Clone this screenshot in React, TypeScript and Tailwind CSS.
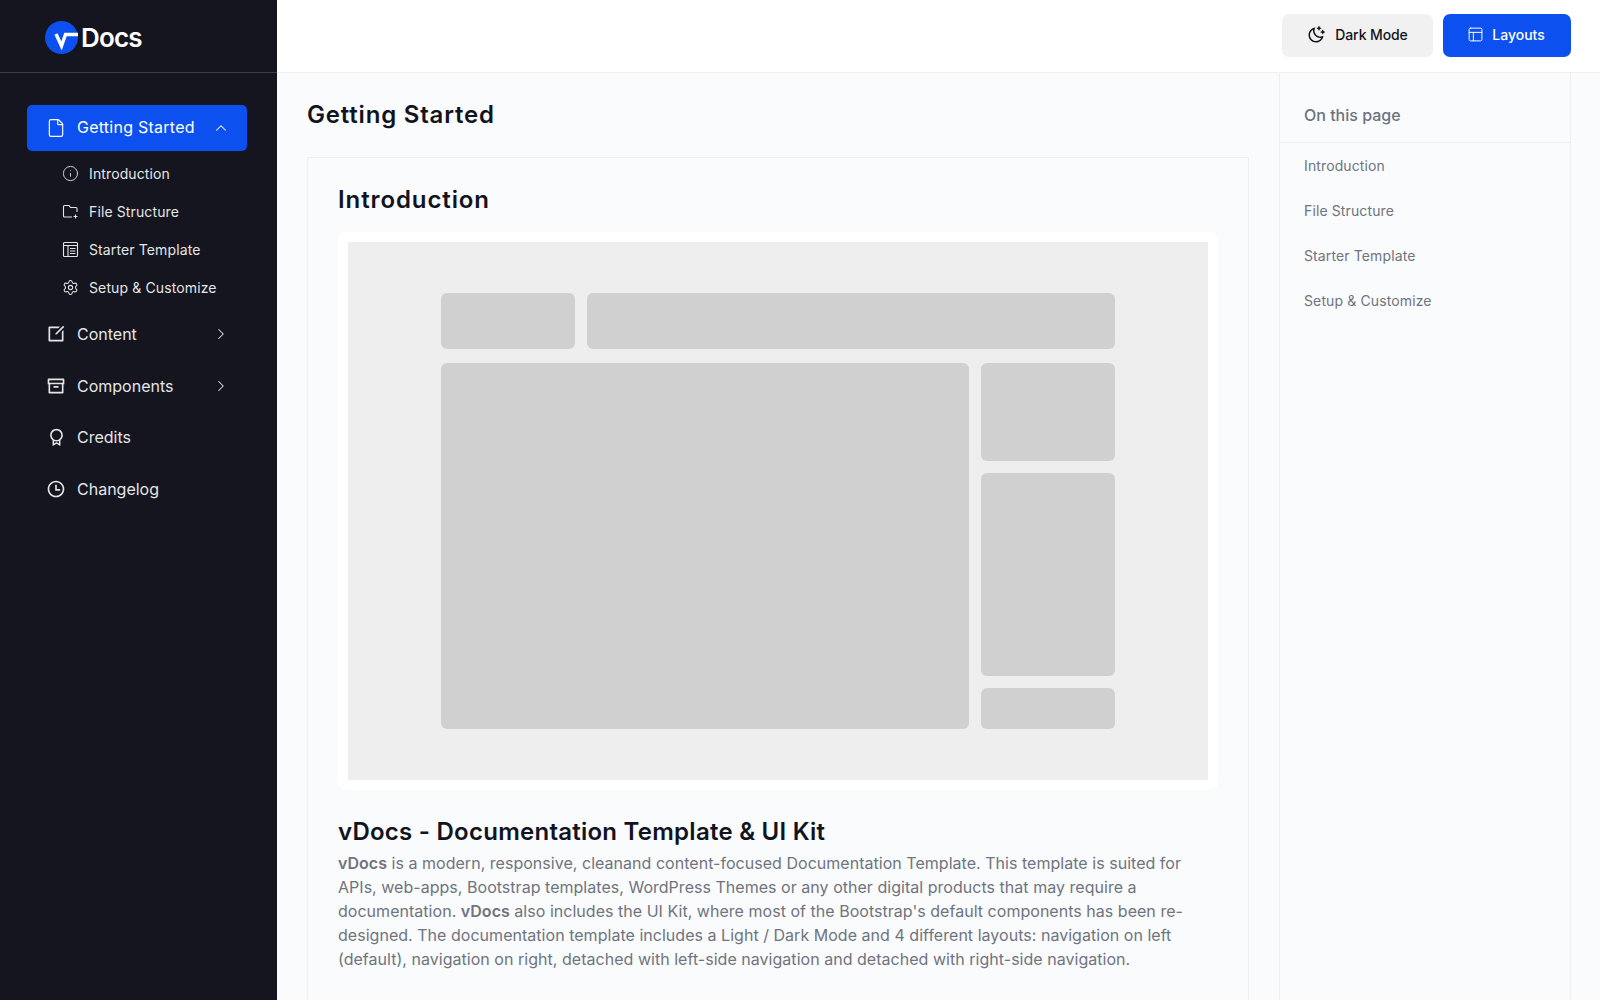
import { ReactNode } from "react";
import { ChevronRight, ChevronUp, File, Info, PanelsTopLeft, Settings } from "lucide-react";
import { RiArchiveLine, RiAwardLine, RiEditBoxLine, RiMoonClearLine, RiTimeLine } from "react-icons/ri";

const TemplateIcon = () => (
  <svg width="17" height="17" viewBox="0 0 17 17" fill="none" stroke="currentColor" strokeWidth="1.1">
    <rect x="1.5" y="1.5" width="14" height="14" rx="1" />
    <path d="M1.5 4.5h14M6 4.5v11M8 7.5h5.5M8 10h5.5M8 12.5h5.5" />
  </svg>
);

const FolderIcon = () => (
  <svg width="17" height="17" viewBox="0 0 17 17" fill="none" stroke="currentColor" strokeWidth="1.1">
    <path d="M15 9V5.5a1 1 0 0 0-1-1H8.500L7 2.500H2.500a1 1 0 0 0-1 1V13a1 1 0 0 0 1 1H10" />
    <path d="M13.500 11.500v4M11.500 13.500h4" />
  </svg>
);

const Logo = () => (
  <div className="flex items-center">
    <svg width="33" height="33" viewBox="0 0 33 33">
      <circle cx="16.5" cy="16.5" r="16.500" fill="#0d50f0" />
      <path d="M11 13l5.500 12 4-11.500H33" fill="none" stroke="#fff" strokeWidth="3.4" />
    </svg>
    <span className="ml-[3px] text-[26px] font-semibold tracking-[-0.8px] text-white">Docs</span>
  </div>
);

const subItems: { label: string; icon: ReactNode }[] = [
  { label: "Introduction", icon: <Info size={17} strokeWidth={1.25} /> },
  { label: "File Structure", icon: <FolderIcon /> },
  { label: "Starter Template", icon: <TemplateIcon /> },
  { label: "Setup & Customize", icon: <Settings size={17} strokeWidth={1.5} /> },
];

const navItems: { label: string; icon: ReactNode; more?: boolean }[] = [
  { label: "Content", icon: <RiEditBoxLine size={20} />, more: true },
  { label: "Components", icon: <RiArchiveLine size={20} />, more: true },
  { label: "Credits", icon: <RiAwardLine size={19} /> },
  { label: "Changelog", icon: <RiTimeLine size={20} /> },
];

const tocItems = ["Introduction", "File Structure", "Starter Template", "Setup & Customize"];

const Sidebar = () => (
  <aside className="w-[277px] shrink-0 bg-[#14151e] text-[#e4e5e7]">
    <div className="flex h-[73px] items-center border-b border-[#3b3d45] pl-[45px] pt-[2px]">
      <Logo />
    </div>
    <nav className="px-[27px] pt-[32px]">
      <div className="flex h-[46px] w-[220px] items-center rounded-[5px] bg-[#0d50f0] pl-[19px] pr-[17px] text-white">
        <File size={20} strokeWidth={1.4} />
        <span className="ml-[11px] -mt-[2px] flex-1 text-[16px] tracking-[0.25px]">Getting Started</span>
        <ChevronUp size={18} strokeWidth={1.4} />
      </div>
      <ul className="pt-[3px]">
        {subItems.map((item) => (
          <li key={item.label} className="flex h-[38px] items-center pl-[35px]">
            {item.icon}
            <span className="ml-[10px] text-[14px] tracking-[0.12px]">{item.label}</span>
          </li>
        ))}
      </ul>
      <ul className="pt-[2px]">
        {navItems.map((item) => (
          <li key={item.label} className="flex h-[51.7px] w-[220px] items-center pl-[19px] pr-[17px]">
            <span className="flex w-[20px] justify-center">{item.icon}</span>
            <span className="ml-[11px] flex-1 text-[16px]">{item.label}</span>
            {item.more && <ChevronRight size={18} strokeWidth={1.4} />}
          </li>
        ))}
      </ul>
    </nav>
  </aside>
);

const Wireframe = () => (
  <div className="rounded-[8px] bg-white p-[10px]">
    <div className="flex h-[538px] flex-col gap-[14px] bg-[#eeeeee] pl-[93px] pr-[93px] pt-[51px]">
      <div className="flex gap-[12px]">
        <div className="h-[56px] w-[134px] rounded-[6px] bg-[#d0d0d0]" />
        <div className="h-[56px] flex-1 rounded-[6px] bg-[#d0d0d0]" />
      </div>
      <div className="flex gap-[12px]">
        <div className="h-[366px] flex-1 rounded-[6px] bg-[#d0d0d0]" />
        <div className="flex w-[134px] flex-col gap-[12px]">
          <div className="h-[98px] rounded-[6px] bg-[#d0d0d0]" />
          <div className="h-[203px] rounded-[6px] bg-[#d0d0d0]" />
          <div className="h-[41px] rounded-[6px] bg-[#d0d0d0]" />
        </div>
      </div>
    </div>
  </div>
);

export default function App() {
  return (
    <div className="flex h-screen overflow-hidden bg-[#fafbfd] font-['Inter',sans-serif]">
      <Sidebar />
      <div className="flex min-w-0 flex-1 flex-col">
        <header className="flex h-[73px] shrink-0 items-start justify-end gap-[10px] border-b border-[#eeeff1] bg-white pr-[29px] pt-[14px]">
          <button className="flex h-[43px] w-[151px] items-center justify-center gap-[10px] rounded-[7px] bg-[#f1f1f1] pb-[2px] text-[14px] font-medium tracking-[-0.1px] text-[#12141d]">
            <RiMoonClearLine size={18} />
            Dark Mode
          </button>
          <button className="flex h-[43px] w-[128px] items-center justify-center gap-[8px] rounded-[7px] bg-[#0d50f0] pb-[2px] pr-[2px] text-[14px] font-medium text-white">
            <PanelsTopLeft size={17} strokeWidth={1.4} />
            Layouts
          </button>
        </header>
        <div className="flex min-h-0 flex-1 pr-[29px]">
          <main className="w-[1002px] shrink-0 pl-[30px] pr-[30px]">
            <h1 className="flex h-[84px] items-center text-[24px] font-semibold tracking-[0.8px] text-[#12141d]">Getting Started</h1>
            <section className="border border-[#eeeff1] px-[30px] pb-[60px] pt-[26px]">
              <h2 className="mb-[16px] text-[24px] font-semibold leading-[32px] tracking-[0.9px] text-[#12141d]">Introduction</h2>
              <Wireframe />
              <h3 className="mt-[26px] text-[24px] font-semibold leading-[32px] tracking-[0.25px] text-[#12141d]">vDocs - Documentation Template &amp; UI Kit</h3>
              <p className="mt-[3px] text-[16px] leading-[24px] tracking-[0.03px] text-[#6f747e]">
                <strong className="font-semibold">vDocs</strong> is a modern, responsive, cleanand content-focused Documentation Template. This template is suited for APIs, web-apps, Bootstrap templates, WordPress Themes or any other digital products that may require a documentation. <strong className="font-semibold">vDocs</strong> also includes the UI Kit, where most of the Bootstrap's default components has been re-designed. The documentation template includes a Light / Dark Mode and 4 different layouts: navigation on left (default), navigation on right, detached with left-side navigation and detached with right-side navigation.
              </p>
            </section>
          </main>
          <aside className="flex-1 border-x border-[#eeeff1]">
            <div className="flex h-[70px] items-center border-b border-[#eeeff1] pl-[24px] pt-[14px] text-[16px] font-medium text-[#6b7280]">On this page</div>
            <ul className="pl-[24px] text-[14px] tracking-[0.12px] text-[#6f747e]">
              {tocItems.map((t) => (
                <li key={t} className="flex h-[45px] items-center">{t}</li>
              ))}
            </ul>
          </aside>
        </div>
      </div>
    </div>
  );
}
